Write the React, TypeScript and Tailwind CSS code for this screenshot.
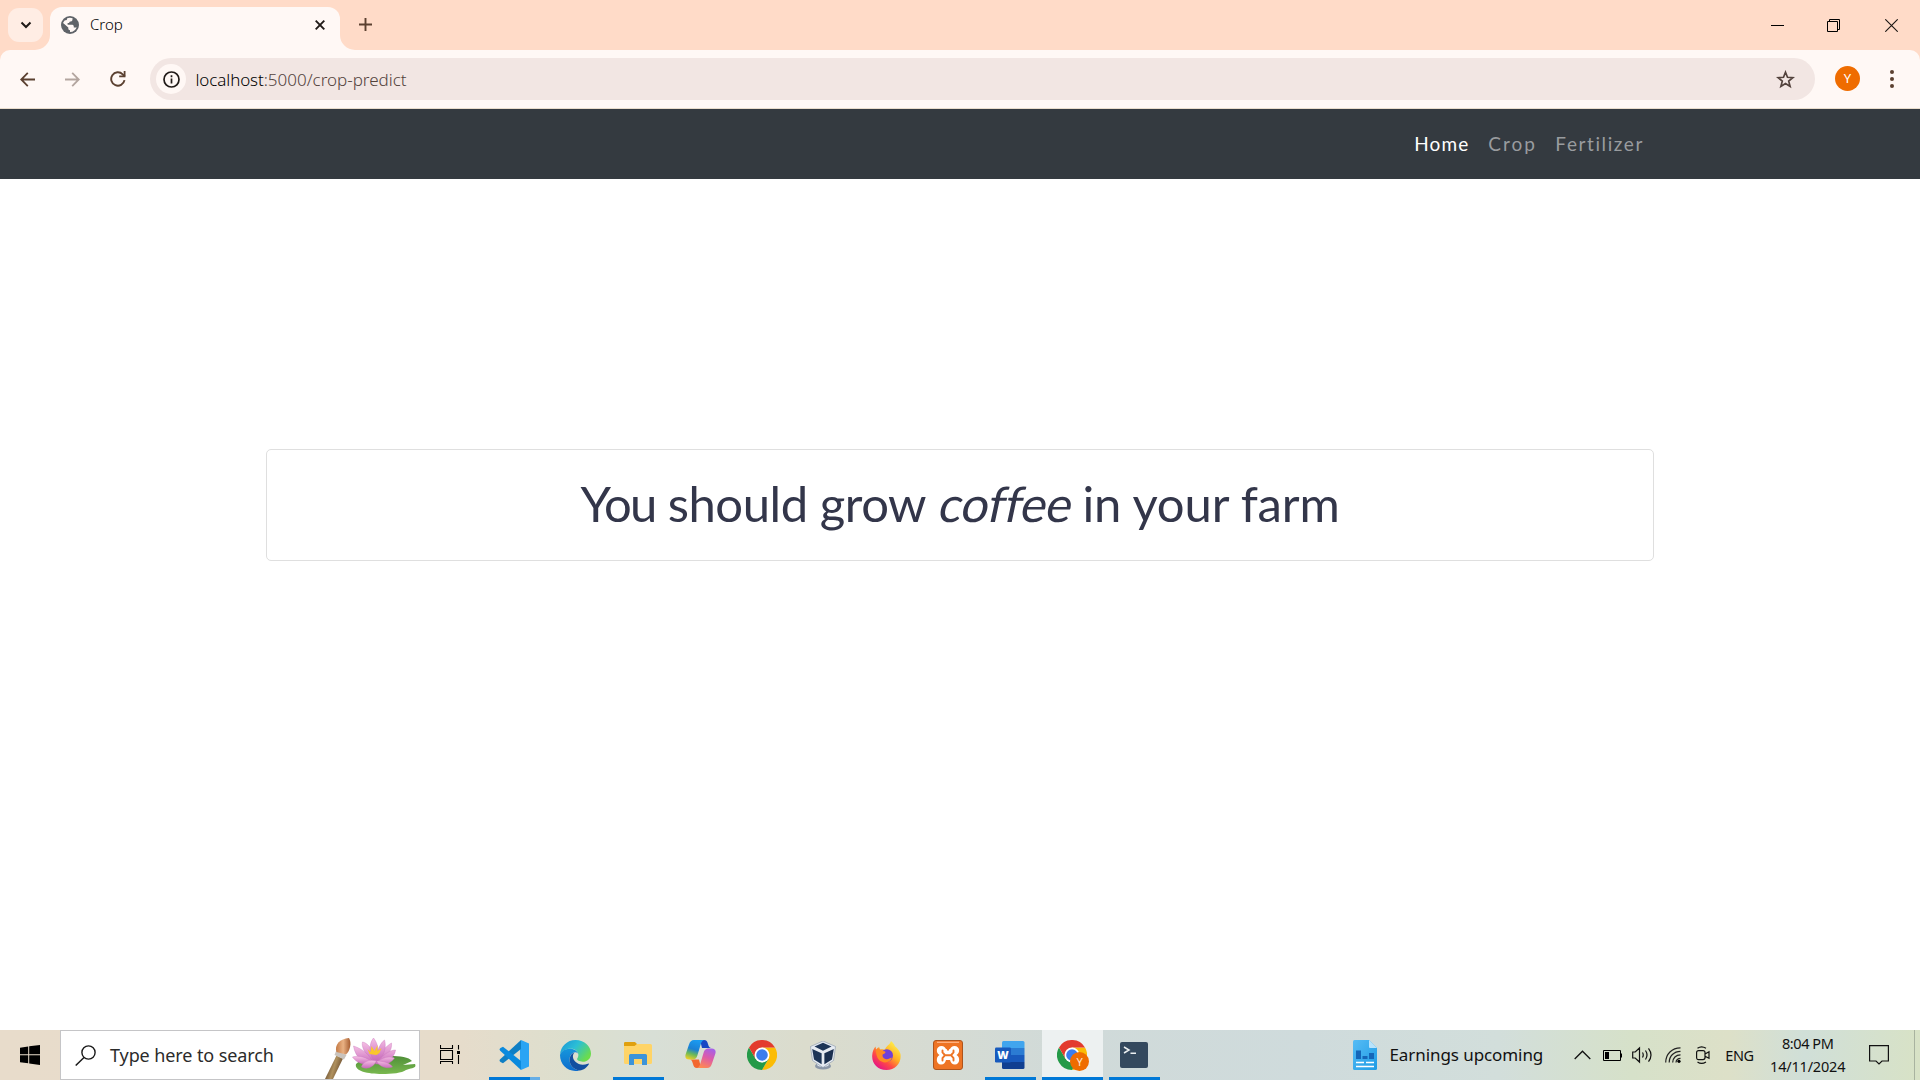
import type { ReactNode } from "react";

const SYS = "font-['Noto_Sans',sans-serif]";

function Globe() {
  return (
    <svg className="size-[18px]" viewBox="0 0 18 18">
      <circle cx="9" cy="9" r="9" fill="#5f6368" />
      <path d="M6.2 2.2C7.8 1.5 10 1.5 11.6 2.2L11.4 4c-.2 1-1.2 1.6-2.200 1.600C8.500 5.700 8.200 6.200 8.200 7H6.600v1.800h4.600c1.600 0 1.600 1.600 1.600 2.700h1.600c.6 0 1-.2 1.400-.6-.9 2.900-3.400 5-6.800 5v-1.600c-1 0-1.700-.7-1.700-1.700v-1L2 6.900C2.500 6 3.200 5 3.900 4.300c1 .3 2.300-.4 2.300-2.100z" fill="#fff8f5" />
      <path d="M2.300 7.500l4.200 4.300v1.400c0 .9.700 1.700 1.500 1.900v1C4.400 15.600 1.700 12.500 2.300 7.500z" fill="#5f6368" />
    </svg>
  );
}

function ChromeLogo() {
  return (
    <svg className="size-[30px] shrink-0" viewBox="0 0 48 48">
      <path d="M24 12H44.800A24 24 0 0 1 24 48L34.400 30z" fill="#fbbc05" />
      <path d="M3.200 12L13.600 30 24 36 34.400 30 24 48A24 24 0 0 1 3.200 12z" fill="#249a48" />
      <path d="M24 12h20.800A24 24 0 0 0 3.200 12l10.400 18z" fill="#e33b2e" />
      <circle cx="24" cy="24" r="12" fill="#fff" />
      <circle cx="24" cy="24" r="9.300" fill="#3b7ded" />
    </svg>
  );
}

function VsCode() {
  return (
    <svg className="size-[30px]" viewBox="0 0 30 30">
      <path d="M22 0L30 3.500V26.500L22 30 21 21V9z" fill="#2aa4f4" />
      <path d="M22 0v9L4 23.200 1.500 22C.3 21 .3 20.200 1.200 19.300z" fill="#0f7fc4" />
      <path d="M22 30v-9L4 6.800 1.500 8C.3 9 .3 9.800 1.200 10.700z" fill="#0a8ade" />
    </svg>
  );
}

function Edge() {
  return (
    <svg className="size-[31px]" viewBox="0 0 30 30">
      <defs>
        <linearGradient id="edgeTop" x1="0" y1="0" x2="1" y2=".6">
          <stop offset="0" stopColor="#1a93d8" />
          <stop offset=".5" stopColor="#2bbfd6" />
          <stop offset="1" stopColor="#6bdc4c" />
        </linearGradient>
        <linearGradient id="edgeBlue" x1="0" y1="0" x2="0" y2="1">
          <stop offset="0" stopColor="#1596dc" />
          <stop offset="1" stopColor="#0e6ccc" />
        </linearGradient>
      </defs>
      <path d="M0 14C.7 6 7 0 15 0c9 0 15 6.500 15 13 0 5-3.500 8-8 8-3.500 0-5.500-1.200-5.500-2.500 0-1 1.300-1.500 1.300-4C17.800 11 14.500 8.500 10.500 8.500 5 8.500 1.500 11 0 14z" fill="url(#edgeTop)" />
      <path d="M0 14.500C.8 11 5.500 8 10.500 8.500c4 .3 7.300 3 7.300 6 0-1.500-1.300-2.600-3-2.600-3.500 0-5.500 3.600-5.500 7.300 0 5.300 4 9.800 9.700 10.200C8.500 32 0 24.500 0 14.500z" fill="url(#edgeBlue)" />
      <path d="M14 12c-3 .8-4.700 4-4.700 7.200 0 5.500 4 10 9.700 10.200 4 0 7-3 8.800-5.600.4-.7-.2-1.200-.8-.9C19 26 12.500 21 12.500 16c0-2 .8-3.300 1.500-4z" fill="#124fa0" />
    </svg>
  );
}

function Folder() {
  return (
    <svg className="h-[23px] w-[28px]" viewBox="0 0 28 23">
      <path d="M0 1.200Q0 0 1.200 0H11l2 2-1 3H0z" fill="#e0a00e" />
      <path d="M0 4H10.500L13 2H26.500Q28 2 28 3.500V20.500Q28 22 26.500 22H1.500Q0 22 0 20.500z" fill="#ffd467" />
      <path d="M5 23V13.500Q5 12 6.500 12H21.500Q23 12 23 13.500V23H18V17H10V23z" fill="#3d94d9" />
    </svg>
  );
}

function Copilot() {
  return (
    <svg className="h-[28px] w-[31px]" viewBox="0 0 31 28">
      <defs>
        <linearGradient id="cpA" x1=".5" y1="0" x2=".2" y2="1">
          <stop offset="0" stopColor="#1a9af0" />
          <stop offset=".45" stopColor="#1b80d4" />
          <stop offset=".7" stopColor="#69b85a" />
          <stop offset="1" stopColor="#f2d125" />
        </linearGradient>
        <linearGradient id="cpB" x1=".7" y1="0" x2=".3" y2="1">
          <stop offset="0" stopColor="#a660e8" />
          <stop offset=".45" stopColor="#dd5ba8" />
          <stop offset="1" stopColor="#ff8a52" />
        </linearGradient>
      </defs>
      <path d="M15 0h4c2.500 0 3.300 1.500 4 4 .6 2.300 1.200 3.600 3 4H17z" fill="#1747c4" />
      <path d="M16 28h-4c-2.500 0-3.300-1.500-4-4-.6-2.300-1.200-4-3-4.500h9z" fill="#f3672f" />
      <path d="M9 0h10c-2 .5-2.700 2.500-3.500 5l-3 10c-.9 3-2 4.500-5.500 4.500H4.500C1 19.500-.2 17.500.6 14.500L4 4.500C5 1.500 6.300 0 9 0z" fill="url(#cpA)" />
      <path d="M22 28H12c2-.5 2.700-2.500 3.500-5l3-10c.9-3 2-4.500 5.500-4.500h2.500c3.500 0 4.700 2 3.900 5L27 23.500C26 26.500 24.700 28 22 28z" fill="url(#cpB)" />
    </svg>
  );
}

function VirtualBox() {
  return (
    <svg className="h-[29px] w-[26px]" viewBox="0 0 26 29">
      <ellipse cx="13" cy="25" rx="8" ry="3.600" fill="#8b97a8" />
      <ellipse cx="13" cy="23.500" rx="6" ry="2.500" fill="#dfe5ec" />
      <path d="M13 0L25.500 5.500 23.500 19.500 13 26.500 2.500 19.500.5 5.500z" fill="#e6ebf2" stroke="#8593a8" strokeWidth=".6" />
      <path d="M13 1.800L21.500 5.600 13 9.800 4.500 5.600z" fill="#1d3557" />
      <path d="M2.200 8L11.600 12.300V23.200L4 18.400z" fill="#1d3557" />
      <path d="M23.800 8L14.400 12.300V23.200L22 18.400z" fill="#1a2f4f" />
    </svg>
  );
}

function Firefox() {
  return (
    <svg className="size-[29px]" viewBox="0 0 29 29">
      <defs>
        <linearGradient id="ffA" x1=".85" y1=".1" x2=".2" y2=".95">
          <stop offset="0" stopColor="#fff04a" />
          <stop offset=".4" stopColor="#ffae24" />
          <stop offset=".68" stopColor="#ff4a45" />
          <stop offset="1" stopColor="#e4128a" />
        </linearGradient>
      </defs>
      <path d="M19 0c2 2 3.200 3 4 5.500C24.500 6 27.500 9.500 28.500 13c1.300 9-5 16-14 16S-.3 22 .2 14.500C.4 10.500 1.800 7.500 3.500 5.500l.6 3C5 7.300 6 6.600 7.200 6.200L8 8.600c1.800-.5 3.700-.5 5 .2C14 4.500 18 4 19 0z" fill="url(#ffA)" />
      <circle cx="14.800" cy="14.500" r="6.200" fill="#7140d8" />
      <path d="M4 9C6 7 8 8.400 9.500 9.700c2 .1 4 .5 4 1.500 0 1.200-2.600 1.700-3 2.500-.2 2 .8 4 3.500 4.500 3 .4 4-2 6-1.500-1.300 3.500-5 5.300-8.500 4.500C6 20 4 15 4 9z" fill="#ff8a24" />
    </svg>
  );
}

function Xampp() {
  return (
    <svg className="size-[30px]" viewBox="0 0 30 30">
      <rect x=".5" y=".5" width="29" height="29" rx="2.500" fill="#ee7424" stroke="#ae541c" />
      <path d="M4 2.300H26" stroke="#ffb78a" strokeWidth="1.200" />
      <path d="M8.500 6C11 6 12.300 7.500 13 9h4c.7-1.500 2-3 4.500-3C27 6 27.500 13 23.500 15c4 2 3.500 9.500-1.500 9.500-3 0-4.300-2-5-4.500h-4c-.7 2.500-2 4.500-5 4.500-5 0-5.500-7.500-1.500-9.500C2.500 13 3 6 8.500 6z" fill="#fff" />
      <path d="M13.200 5.500h3.600L16 10.500h-2zM13.200 25h3.600l-.8-5h-2z" fill="#ee7424" />
      <path d="M9.500 10.500v2L12 15.200h6l2.500-2.700v-2M9.500 20.500v-2.500L12 15.200M20.500 20.500v-2.500L18 15.200" fill="none" stroke="#ee7424" strokeWidth="1.900" strokeLinecap="round" />
    </svg>
  );
}

function Word() {
  return (
    <svg className="h-[28px] w-[30px]" viewBox="0 0 30 28">
      <path d="M7 1.500Q7 0 8.500 0H28Q29.500 0 29.500 1.500V7H7z" fill="#41a5ee" />
      <path d="M7 7H29.500V14H7z" fill="#2b7cd3" />
      <path d="M7 14H29.500V21H7z" fill="#185abd" />
      <path d="M7 21H29.500V26.500Q29.500 28 28 28H8.500Q7 28 7 26.500z" fill="#103f91" />
      <rect x="0" y="6.500" width="16" height="15" rx="1.300" fill="#185abd" />
      <text x="8" y="18" textAnchor="middle" fontFamily="Open Sans, sans-serif" fontWeight="800" fontSize="11" fill="#fff">W</text>
    </svg>
  );
}

function Terminal() {
  return (
    <svg className="h-[26px] w-[28px]" viewBox="0 0 28 26">
      <rect width="28" height="26" rx="2" fill="#34495e" />
      <path d="M4 5L9 8 4 11M10.500 11.300H16" fill="none" stroke="#ecf0f1" strokeWidth="1.500" />
    </svg>
  );
}

function Lotus() {
  return (
    <svg className="h-[42px] w-[94px]" viewBox="0 0 94 42">
      <defs>
        <linearGradient id="petal" x1="0" y1="0" x2="0" y2="1">
          <stop offset="0" stopColor="#f5bfe4" />
          <stop offset="1" stopColor="#c76abb" />
        </linearGradient>
        <linearGradient id="pad" x1="0" y1="0" x2="0" y2="1">
          <stop offset="0" stopColor="#4f8f38" />
          <stop offset="1" stopColor="#79b84f" />
        </linearGradient>
        <linearGradient id="handle" x1="0" y1="0" x2="1" y2=".4">
          <stop offset=".2" stopColor="#5f452d" />
          <stop offset=".6" stopColor="#b0915e" />
          <stop offset="1" stopColor="#684a2c" />
        </linearGradient>
        <linearGradient id="brush" x1="0" y1="0" x2="1" y2="0">
          <stop offset="0" stopColor="#c47a45" />
          <stop offset=".5" stopColor="#e9b183" />
          <stop offset="1" stopColor="#a55c30" />
        </linearGradient>
      </defs>
      <path d="M2 42L13.500 18.500 20 21.500 10 42z" fill="url(#handle)" />
      <path d="M13.500 13L23.500 18 21 22.500 11.500 18z" fill="#c9c3bd" />
      <path d="M13.500 15C11 8 17 1.500 26 1c3 5 1 13-3 16.500z" fill="url(#brush)" />
      <path d="M33 27c6-7 20-8 34-8 10 0 19 1 22 5l-9 4 12-1c1.500 3-1 4-6 5l-3 1c-4 3-14 4-24 4-14 0-28-3-26-10z" fill="url(#pad)" />
      <g transform="translate(1.500 0)">
        <g fill="url(#petal)" stroke="#c873ba" strokeWidth=".4">
          <path d="M49 25C39 16 37 9 38 5c5 1 9 6 11 12zM47 25C55 16 62 9 67 6c1 7-5 16-13 20z" />
          <path d="M49 24C44 14 45 6 49 1c4 5 6 12 4 22zM51 23C53 12 56 6 60 3c2 7 0 15-6 21z" />
          <path d="M49 27C39 27 31 21 29 9c9 3 16 8 20 18zM51 27C57 19 65 13 71 13c-1 8-9 14-20 14z" />
          <path d="M49 26C42 20 35 18 28 20c4 6 12 9 21 6zM51 26c7-6 14-7 19-5-4 6-11 8-19 5z" />
          <path d="M52 24C45 22 38 25 37 30c6 3 12 0 15-6zM52 24c7 0 14 2 16 6-6 2-13 0-16-6z" />
        </g>
        <path d="M43 12l3 3 1-6 3 5 3-6 0 6 4-3-2 5-3 2-7-1z" fill="#f9c62c" />
      </g>
    </svg>
  );
}

function Earnings() {
  return (
    <svg className="h-[30px] w-[24px]" viewBox="0 0 24 30">
      <defs>
        <linearGradient id="doc" x1="0" y1="0" x2="1" y2="1">
          <stop offset="0" stopColor="#56bcf5" />
          <stop offset="1" stopColor="#1e9be5" />
        </linearGradient>
      </defs>
      <path d="M1.500 0H16L24 8V28.500Q24 30 22.500 30H1.500Q0 30 0 28.500V1.500Q0 0 1.500 0z" fill="url(#doc)" />
      <path d="M16 0L24 8H17Q16 8 16 7z" fill="#b9e3fb" />
      <path d="M3 10.500h5V19H3zM9.500 16h5v3h-5zM16 13h5v6h-5z" fill="#1566b8" />
      <path d="M3 22.500h8M13 22.500h8M3 26.500h18" stroke="#fff" strokeWidth="1.700" />
    </svg>
  );
}

function TaskItem({ children, bar, active = false }: { children?: ReactNode; bar?: ReactNode; active?: boolean }) {
  return (
    <div className={active ? "ml-px flex h-[50px] w-[61px] flex-col items-center bg-[#edf1f1]" : "flex h-[50px] w-[62px] flex-col items-center"}>
      <div className="flex flex-1 items-center justify-center pt-[3px]">{children}</div>
      <div className="flex h-[3px] w-full justify-center">{bar}</div>
    </div>
  );
}

const OpenBar = () => <span className="h-full w-[51px] bg-[#0078d7]" />;

export default function App() {
  return (
    <div className={`flex h-[1080px] w-[1920px] flex-col overflow-hidden bg-white ${SYS}`}>
      <header className="flex flex-col bg-[#ffdbc8]">
        <div className="flex h-[50px]">
          <div className="flex w-[50px] items-start pt-2 pl-2">
            <div className="flex h-[34px] w-[35px] items-center justify-center rounded-[11px] bg-[#ffede4]">
              <svg className="size-3" viewBox="0 0 12 12"><path d="M1.500 3.500L6 8l4.500-4.500" fill="none" stroke="#201a17" strokeWidth="2" /></svg>
            </div>
          </div>
          <div className="relative mt-[7px] flex h-[43px] w-[290px] items-start rounded-t-[12px] bg-[#fff8f5] pt-[9px] pl-[11px]">
            <svg className="absolute bottom-0 -left-[15px] size-[15px]" viewBox="0 0 15 15"><path d="M15 0V15H0A15 15 0 0 0 15 0z" fill="#fff8f5" /></svg>
            <svg className="absolute -right-[15px] bottom-0 size-[15px]" viewBox="0 0 15 15"><path d="M0 0V15H15A15 15 0 0 1 0 0z" fill="#fff8f5" /></svg>
            <Globe />
            <span className="ml-[11px] text-[15px] leading-[17px] font-light text-black">Crop</span>
            <svg className="mt-1 mr-[15px] ml-auto size-[10px]" viewBox="0 0 10 10"><path d="M.7.7l8.600 8.600M9.300.7L.7 9.300" stroke="#201a17" strokeWidth="1.900" /></svg>
          </div>
          <svg className="mt-[18px] ml-[19px] size-[13px]" viewBox="0 0 13 13"><path d="M6.500 0V13M0 6.500H13" stroke="#5b4030" strokeWidth="1.900" /></svg>
          <div className="mr-[22px] ml-auto flex items-center">
            <svg className="size-[13px]" viewBox="0 0 13 13"><path d="M0 6.500H13" stroke="#000" /></svg>
            <svg className="ml-[43px] size-[13px]" viewBox="0 0 13 13"><path d="M.5 2.500h10v10H.5zM2.500 2.500v-2h10v10h-2" fill="none" stroke="#000" /></svg>
            <svg className="ml-[45px] size-[13px]" viewBox="0 0 13 13"><path d="M.3.3l12.400 12.400M12.700.3L.3 12.700" stroke="#1a1512" strokeWidth="1.100" /></svg>
          </div>
        </div>
        <div className="flex h-[59px] items-start rounded-t-[10px] border-b border-[#e9dccb] bg-[#fff8f5] pt-2">
          <div className="flex h-[42px] w-[150px] items-center pl-5">
            <svg className="size-[15px]" viewBox="0 0 15 15"><path d="M15 7.500H1.500M7.800.8L1.200 7.500l6.600 6.700" fill="none" stroke="#5b4030" strokeWidth="1.800" /></svg>
            <svg className="ml-[30px] size-[15px]" viewBox="0 0 15 15"><path d="M0 7.500h13.500M7.200.8l6.600 6.700-6.600 6.700" fill="none" stroke="#b3a59f" strokeWidth="1.800" /></svg>
            <svg className="ml-[30px] size-4" viewBox="0 0 16 16"><path d="M14.500 9.200A6.700 6.700 0 1 1 12.700 3.300L14.800 5.500" fill="none" stroke="#5b4030" strokeWidth="1.900" /><path d="M15.500 0V6.300H9.200V4.500h4.500V0z" fill="#5b4030" /></svg>
          </div>
          <div className="flex h-[42px] w-[1665px] items-center rounded-full bg-[#f2e6e3] pl-1.5">
            <div className="flex size-[30px] items-center justify-center rounded-full bg-[#fff8f5]">
              <svg className="size-[17px]" viewBox="0 0 17 17"><circle cx="8.500" cy="8.500" r="7.500" fill="none" stroke="#201a17" strokeWidth="1.700" /><path d="M8.500 7.500v5M8.500 4.300v1.900" stroke="#201a17" strokeWidth="1.700" /></svg>
            </div>
            <p className="ml-[9.500px] pt-px text-[17px] leading-6 font-light whitespace-nowrap text-[#53433d]"><span className="tracking-[-0.1px] text-black">localhost</span>:5000/crop-predict</p>
            <svg className="mr-5 ml-auto size-[19px]" viewBox="0 0 19 19"><path d="M9.500 2.200l2 5.100 5.400.4-4.200 3.400 1.400 5.300-4.600-2.900-4.600 2.900 1.400-5.300L2.100 7.700l5.400-.4z" fill="none" stroke="#53433d" strokeWidth="1.700" /></svg>
          </div>
          <div className="mt-2 ml-[20px] flex size-[25px] items-center justify-center rounded-full bg-[#ef6c00] text-[13px] leading-none text-white">Y</div>
          <div className="mt-3 ml-[30px] flex flex-col gap-[3px]">
            <span className="size-1 rounded-full bg-[#5b4030]" />
            <span className="size-1 rounded-full bg-[#5b4030]" />
            <span className="size-1 rounded-full bg-[#5b4030]" />
          </div>
        </div>
      </header>

      <nav className="flex h-[70px] shrink-0 items-center justify-end bg-[#343a40] pr-[276px] pb-[2px] font-['Lato',sans-serif] text-[19px] leading-none text-[#999c9f]">
        <span className="mr-[19px] tracking-[1.1px] text-white">Home</span>
        <span className="mr-[18.500px] tracking-[2px]">Crop</span>
        <span className="tracking-[1.600px]">Fertilizer</span>
      </nav>

      <main className="flex flex-1 flex-col items-center pt-[270px]">
        <h2 className="flex h-[112px] w-[1388px] items-center justify-center rounded-[5px] border border-[#dfdfdf] pb-[3px] font-['Lato',sans-serif] text-[49px] leading-none tracking-[-0.450px] text-[#33364a]">
          <span className="whitespace-pre"><span className="tracking-[-1.700px]">You</span> should grow <i className="inline-block origin-[50%_80%] -skew-x-12 not-italic">coffee</i><span className="tracking-[-0.150px]"> in your farm</span></span>
        </h2>
      </main>

      <footer className="flex h-[50px] shrink-0 items-center bg-[linear-gradient(to_right,#e8dccb_0%,#e6dccb_24%,#dcdfce_30%,#d8dfd6_34%,#dbdccd_42%,#d0dad9_56%,#cfdbdc_68%,#d2dedb_78%,#d6e1c9_85%,#dde0c8_90%,#d0dfd8_94%,#d8e2c6_100%)]">
        <div className="flex w-[60px] justify-center">
          <svg className="size-5" viewBox="0 0 20 20"><path d="M0 2.700L8.200 1.500V9.300H0zM9.200 1.300L20 0V9.300H9.200zM0 10.300H8.200V18.300L0 17.200zM9.200 10.300H20V20L9.200 18.500z" /></svg>
        </div>
        <div className="flex h-[50px] w-[360px] items-center border border-[#c5c5c7] bg-white pl-3.5">
          <svg className="size-[21px]" viewBox="0 0 21 21"><circle cx="13.500" cy="7.500" r="6.600" fill="none" stroke="#1a1a1a" strokeWidth="1.400" /><path d="M9 12.500L.7 20.500" stroke="#1a1a1a" strokeWidth="1.500" /></svg>
          <span className="ml-[14px] text-[18px] leading-6 tracking-[-0.1px] whitespace-nowrap text-[#2b2b2b]">Type here to search</span>
          <div className="mt-1.5 mr-0.5 ml-auto"><Lotus /></div>
        </div>
        <div className="flex w-[63px] justify-center pr-[3px]">
          <svg className="size-5" viewBox="0 0 20 20" fill="none" stroke="#000"><path d="M.5 0V3.500H12.500V0M.5 5.500h12v9H.5zM.5 19V16.500H12.500V19M18.500 0V4.500M18.500 10V19" strokeWidth="1.100" /><path d="M17 6h3v3h-3z" fill="#000" stroke="none" /></svg>
        </div>
        <TaskItem bar={<><span className="h-full w-[41px] bg-[#0078d7]" /><span className="h-full w-[10px] bg-[#66aee6]" /></>}><VsCode /></TaskItem>
        <TaskItem><div className="-ml-px"><Edge /></div></TaskItem>
        <TaskItem bar={<OpenBar />}><div className="-mt-1"><Folder /></div></TaskItem>
        <TaskItem><div className="-mt-0.5"><Copilot /></div></TaskItem>
        <TaskItem><ChromeLogo /></TaskItem>
        <TaskItem><div className="-ml-0.5"><VirtualBox /></div></TaskItem>
        <TaskItem><Firefox /></TaskItem>
        <TaskItem><Xampp /></TaskItem>
        <TaskItem bar={<OpenBar />}><Word /></TaskItem>
        <TaskItem active bar={<span className="h-full w-full bg-[#0078d7]" />}>
          <div className="relative -ml-px">
            <ChromeLogo />
            <span className="absolute top-3 left-[13px] flex size-[19px] items-center justify-center rounded-full bg-[#ef6c00] text-[11px] leading-none text-[#ffe5d0]">Y</span>
          </div>
        </TaskItem>
        <TaskItem bar={<OpenBar />}><Terminal /></TaskItem>

        <div className="ml-[188px] flex flex-1 items-center">
          <Earnings />
          <span className="ml-[12.500px] text-[17px] leading-6 tracking-[-0.08px] whitespace-nowrap text-[#111]">Earnings upcoming</span>
          <svg className="ml-[31px] h-[10px] w-[17px]" viewBox="0 0 17 10"><path d="M.7 9L8.500 1.200 16.300 9" fill="none" stroke="#111" strokeWidth="1.300" /></svg>
          <svg className="ml-[12px] h-[11px] w-[19px]" viewBox="0 0 19 11"><path d="M.5.5h17v10H.5z" fill="none" stroke="#000" /><path d="M2 2h4v7H2zM18 3.500h1v4h-1z" /></svg>
          <svg className="ml-[10px] h-[18px] w-[21px]" viewBox="0 0 21 18" fill="none" stroke="#111" strokeWidth="1.200"><path d="M.7 6H3.200L7.500 2V16L3.200 12H.7zM10.500 6.500q1.500 2.500 0 5M13.500 4.500q3 4.500 0 9M16.500 2.300q5 6.700 0 13.400" /></svg>
          <svg className="ml-[12px] h-4 w-4" viewBox="0 0 16 16" fill="none" stroke="#222" strokeWidth="1.200"><path d="M.7 15.500C.7 7 7 .8 15.500.8M4.200 15.500C4.200 9 9 4.300 15.500 4.300M7.700 15.500c0-4.500 3.300-7.700 7.800-7.700M11 15.500c0-2.500 2-4.200 4.500-4.200" /><circle cx="14" cy="14.300" r="1.600" fill="#000" stroke="none" /></svg>
          <svg className="ml-[15px] h-[18px] w-[14px]" viewBox="0 0 14 18" fill="none" stroke="#111" strokeWidth="1.200"><path d="M.6 6.600Q.6 4.600 2.600 4.600H7Q9 4.600 9 6.600v5Q9 13.600 7 13.600H2.600Q.6 13.600.6 11.600zM9 8l4-2.300v6.600L9 10.200M1.500 2.200Q5.500-.6 10 2.200M1.500 15.900q4 2.800 8.500 0" /></svg>
          <span className="ml-[15px] text-[14.500px] leading-5 tracking-[-0.4px] text-[#111]">ENG</span>
          <div className="-mt-0.5 ml-[16px] flex w-[76px] flex-col items-center gap-[1px] text-[14.500px] leading-[22px] whitespace-nowrap text-[#111]">
            <span className="tracking-[-0.45px]">8:04 PM</span>
            <span className="tracking-[-0.2px]">14/11/2024</span>
          </div>
          <svg className="mr-[25px] ml-auto h-5 w-5" viewBox="0 0 20 20"><path d="M.6.600H19.400V16H13L10 19 7 16H.6z" fill="none" stroke="#111" strokeWidth="1.200" /></svg>
          <span className="mr-[5px] h-[50px] w-px bg-[#a9b3a0]" />
        </div>
      </footer>
    </div>
  );
}
